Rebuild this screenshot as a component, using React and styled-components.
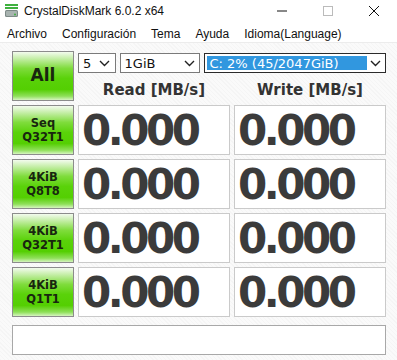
import React from "react";
import styled, { createGlobalStyle } from "styled-components";

const GlobalStyle = createGlobalStyle`
  html, body {
    margin: 0;
    padding: 0;
    background: #ffffff;
  }
  * {
    box-sizing: border-box;
  }
`;

const Window = styled.div`
  width: 397px;
  height: 360px;
  display: flex;
  flex-direction: column;
  background: #ffffff;
  font-family: "Liberation Sans", Arial, sans-serif;
  overflow: hidden;
`;

const TitleBar = styled.div`
  height: 21px;
  display: flex;
  align-items: center;
  padding-left: 5px;
  background: #ffffff;
`;

const Title = styled.span`
  margin-left: 6px;
  font-size: 12px;
  color: #111;
`;

const Controls = styled.div`
  margin-left: auto;
  display: flex;
  height: 100%;
`;

const Ctrl = styled.div`
  width: 46px;
  height: 100%;
  display: flex;
  align-items: center;
  justify-content: center;
`;

const MenuBar = styled.div`
  height: 22px;
  display: flex;
  align-items: flex-end;
  padding: 0 0 1px 7px;
  gap: 15px;
  font-size: 12px;
  color: #111;
  border-bottom: 1px solid #ececec;
`;

const Body = styled.div`
  flex: 1;
  padding: 8px 11px 0 12px;
  background-color: #fafafa;
  background-image: repeating-linear-gradient(
    45deg,
    rgba(0, 0, 0, 0.018) 0 1px,
    transparent 1px 3px
  );
`;

const Grid = styled.div`
  display: grid;
  grid-template-columns: 62px 152px 152px;
  grid-auto-rows: 50px;
  column-gap: 4px;
  row-gap: 4px;
`;

const GreenButton = styled.div`
  display: flex;
  align-items: center;
  justify-content: center;
  text-align: center;
  border: 1px solid #8c8c8c;
  background: linear-gradient(
    to bottom,
    #f3fbee 0%,
    #c4eea6 14%,
    #7fdc3c 34%,
    #5ad20a 55%,
    #54cf02 78%,
    #8fe05a 92%,
    #d6f5c0 100%
  );
  color: #18260f;
  font-family: "DejaVu Sans", Verdana, sans-serif;
  font-weight: bold;
  font-size: ${(p) => (p.$big ? "17px" : "11.5px")};
  line-height: 1.25;
`;

const TopArea = styled.div`
  grid-column: 2 / span 2;
  display: flex;
  flex-direction: column;
`;

const SelectRow = styled.div`
  display: flex;
  gap: 4px;
  margin-top: 2px;
  height: 20px;
`;

const Select = styled.div`
  width: ${(p) => p.$w}px;
  height: 20px;
  display: flex;
  align-items: center;
  background: #ffffff;
  border: 1px solid ${(p) => (p.$active ? "#2b2b2b" : "#7a7a7a")};
  padding: 2px;
  font-family: "DejaVu Sans", Verdana, sans-serif;
  font-size: 13px;
  color: #111;
`;

const SelectValue = styled.div`
  flex: 1;
  height: 100%;
  display: flex;
  align-items: center;
  padding-left: 2px;
  background: ${(p) => (p.$active ? "#3197df" : "transparent")};
  color: ${(p) => (p.$active ? "#ffffff" : "#111")};
  white-space: nowrap;
`;

const Chevron = styled.div`
  width: 16px;
  display: flex;
  align-items: center;
  justify-content: center;
`;

const Headers = styled.div`
  display: grid;
  grid-template-columns: 152px 152px;
  column-gap: 4px;
  margin-top: 8px;
`;

const Header = styled.div`
  text-align: center;
  font-family: "DejaVu Sans", Verdana, sans-serif;
  font-weight: bold;
  font-size: 15px;
  color: #333;
`;

const ValueBox = styled.div`
  background: #ffffff;
  border: 1px solid #cacaca;
  display: flex;
  align-items: center;
  padding-left: 3px;
  font-family: "DejaVu Sans", Verdana, sans-serif;
  font-weight: bold;
  font-size: 42px;
  letter-spacing: -3.5px;
  color: #3b3b3b;
`;

const StatusBar = styled.div`
  margin-top: 8px;
  width: 374px;
  height: 30px;
  background: #ffffff;
  border: 1px solid #a8a8a8;
`;

function AppIcon() {
  return (
    <svg width="13" height="13" viewBox="0 0 13 13">
      <rect x="0" y="0" width="13" height="2" fill="#3fb13f" />
      <rect x="0" y="3" width="13" height="2" fill="#3fb13f" />
      <rect x="0" y="6" width="13" height="7" rx="1.5" fill="#7d8a87" />
      <rect x="1" y="7" width="11" height="5" rx="1" fill="#a8b3b0" />
      <circle cx="10" cy="10.5" r="1" fill="#3fb13f" />
    </svg>
  );
}

function Down() {
  return (
    <svg width="11" height="7" viewBox="0 0 11 7">
      <polyline points="1,1 5.5,5.5 10,1" fill="none" stroke="#222" strokeWidth="1.4" />
    </svg>
  );
}

const rows = [
  ["Seq", "Q32T1"],
  ["4KiB", "Q8T8"],
  ["4KiB", "Q32T1"],
  ["4KiB", "Q1T1"],
];

export default function App() {
  return (
    <Window>
      <GlobalStyle />
      <TitleBar>
        <AppIcon />
        <Title>CrystalDiskMark 6.0.2 x64</Title>
        <Controls>
          <Ctrl>
            <svg width="10" height="10" viewBox="0 0 10 10">
              <line x1="0" y1="5" x2="10" y2="5" stroke="#111" strokeWidth="1" />
            </svg>
          </Ctrl>
          <Ctrl>
            <svg width="10" height="10" viewBox="0 0 10 10">
              <rect x="0.5" y="0.5" width="9" height="9" fill="none" stroke="#bbb" strokeWidth="1" />
            </svg>
          </Ctrl>
          <Ctrl>
            <svg width="10" height="10" viewBox="0 0 10 10">
              <path d="M0 0 L10 10 M10 0 L0 10" stroke="#111" strokeWidth="1" />
            </svg>
          </Ctrl>
        </Controls>
      </TitleBar>
      <MenuBar>
        <span>Archivo</span>
        <span>Configuración</span>
        <span>Tema</span>
        <span>Ayuda</span>
        <span>Idioma(Language)</span>
      </MenuBar>
      <Body>
        <Grid>
          <GreenButton $big>All</GreenButton>
          <TopArea>
            <SelectRow>
              <Select $w={38}>
                <SelectValue>5</SelectValue>
                <Chevron><Down /></Chevron>
              </Select>
              <Select $w={82}>
                <SelectValue>1GiB</SelectValue>
                <Chevron><Down /></Chevron>
              </Select>
              <Select $w={184} $active>
                <SelectValue $active>C: 2% (45/2047GiB)</SelectValue>
                <Chevron><Down /></Chevron>
              </Select>
            </SelectRow>
            <Headers>
              <Header>Read [MB/s]</Header>
              <Header>Write [MB/s]</Header>
            </Headers>
          </TopArea>
          {rows.map(([a, b], i) => (
            <React.Fragment key={i}>
              <GreenButton>
                {a}
                <br />
                {b}
              </GreenButton>
              <ValueBox>0.000</ValueBox>
              <ValueBox>0.000</ValueBox>
            </React.Fragment>
          ))}
        </Grid>
        <StatusBar />
      </Body>
    </Window>
  );
}
